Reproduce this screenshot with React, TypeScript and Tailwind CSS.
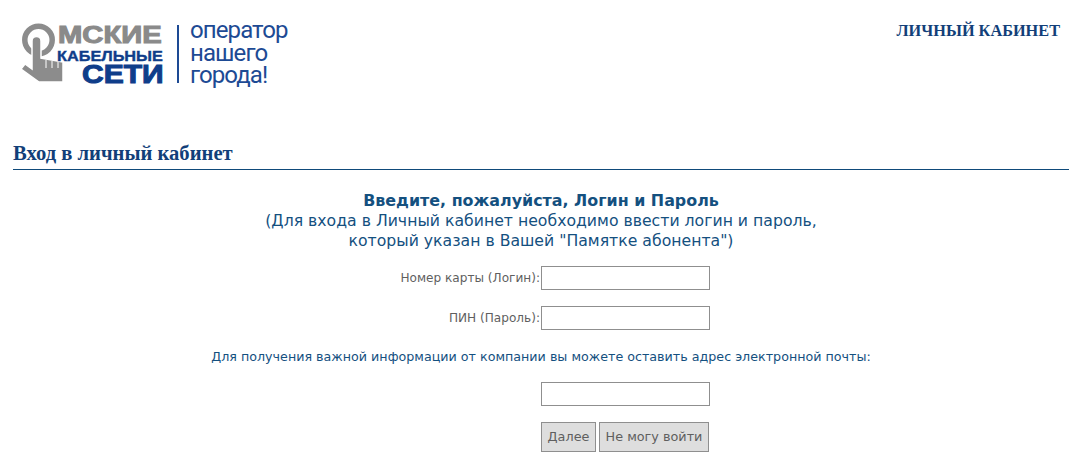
const verdana = "font-['DejaVu_Sans','Liberation_Sans',sans-serif]";

function Logo() {
  return (
    <div className="flex items-start h-[68px]">
      <div className="relative w-[144px] h-[64px] shrink-0 font-['Liberation_Sans',sans-serif] font-bold leading-none">
        {/* ring and pointing hand */}
        <svg width="46" height="62" viewBox="0 0 46 62" className="absolute left-0 top-0">
          <circle cx="18.5" cy="18" r="13.7" fill="none" stroke="#8c8c8c" strokeWidth="5.5" />
          <path
            d="M12 19 a4.5 4.5 0 0 1 9 0 V36 L43 40 V60 H19 L1 47 L5 42 L12 47 Z"
            fill="#8c8c8c"
            stroke="#fff"
            strokeWidth="1.5"
          />
          <path d="M26 38 V46 M32 39 V46 M38 40 V46" stroke="#fff" strokeWidth="1" />
        </svg>
        <span className="absolute left-[38px] top-[2px] text-[23px] text-[#8a8a8a] [-webkit-text-stroke:1px_#8a8a8a] scale-x-[1.27] origin-left">
          МСКИЕ
        </span>
        <span className="absolute left-[37px] top-[26px] text-[15.5px] text-[#0f3d8a] [-webkit-text-stroke:0.4px_#0f3d8a] scale-x-[1.05] origin-left">
          КАБЕЛЬНЫЕ
        </span>
        <span className="absolute left-[62px] top-[40px] text-[25px] text-[#0f3d8a] [-webkit-text-stroke:1px_#0f3d8a] scale-x-[1.2] origin-left">
          СЕТИ
        </span>
      </div>
      <div className="w-[2px] h-[58px] mt-[3px] ml-[13px] bg-[#1d4a94] shrink-0" />
      <div className="ml-[11px] mt-[-3px] text-[24px] leading-[22.5px] text-[#1d4a94] font-['Roboto',sans-serif] font-normal tracking-[-0.9px]">
        <div>оператор</div>
        <div>нашего</div>
        <div>города!</div>
      </div>
    </div>
  );
}

function Row({ label }: { label: string }) {
  return (
    <div className="flex items-center h-[24px] mb-[16px]">
      <label className={`w-[541px] pr-[1px] text-right text-[12.1px] text-[#5f5f5f] ${verdana}`}>{label}</label>
      <input className="w-[169px] h-[24px] bg-white border border-[#8f8f8f]" />
    </div>
  );
}

export default function App() {
  return (
    <div className="h-[458px] overflow-hidden bg-white">
      <header className="flex justify-between items-start h-[144px] pl-[20px] pr-[19px] pt-[22px]">
        <Logo />
        <a className="text-[16.3px] leading-[18px] font-bold text-[#123f79] font-['Liberation_Serif',serif]">
          ЛИЧНЫЙ КАБИНЕТ
        </a>
      </header>

      <h1 className="mx-[13px] w-[1056px] h-[26px] border-b border-[#0f4a7a] text-[20.6px] leading-[18px] font-bold text-[#123f79] font-['Liberation_Serif',serif]">
        Вход в личный кабинет
      </h1>

      <main className="pt-[20px]">
        <div className={`w-[1082px] text-center text-[#14507f] ${verdana}`}>
          <h2 className="text-[15.9px] leading-[21px] font-bold">Введите, пожалуйста, Логин и Пароль</h2>
          <p className="text-[15.7px] leading-[20px]">
            (Для входа в Личный кабинет необходимо ввести логин и пароль,
            <br />
            который указан в Вашей "Памятке абонента")
          </p>
        </div>

        <div className="mt-[15px]">
          <Row label="Номер карты (Логин):" />
          <Row label="ПИН (Пароль):" />
        </div>

        <p className={`mt-[19px] w-[1082px] text-center text-[12.7px] leading-[16px] text-[#14507f] ${verdana}`}>
          Для получения важной информации от компании вы можете оставить адрес электронной почты:
        </p>

        <div className="pl-[541px] mt-[17px]">
          <input className="block w-[169px] h-[24px] bg-white border border-[#8f8f8f]" />
          <div className="flex gap-[3px] mt-[16px]">
            <button className={`w-[55px] h-[30px] bg-[#dedede] border border-[#8f8f8f] text-[12.8px] text-[#5f5f5f] ${verdana}`}>
              Далее
            </button>
            <button className={`w-[110px] h-[30px] bg-[#dedede] border border-[#8f8f8f] text-[12.8px] text-[#5f5f5f] ${verdana}`}>
              Не могу войти
            </button>
          </div>
        </div>
      </main>
    </div>
  );
}
